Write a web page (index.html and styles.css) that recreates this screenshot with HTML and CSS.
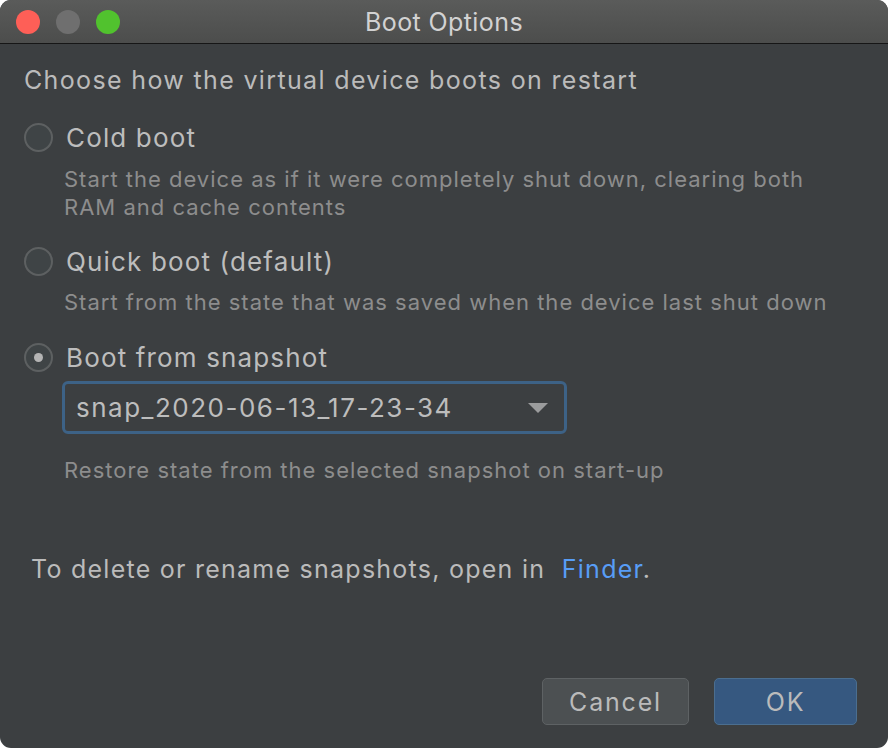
FILE: index.html
```html
<!DOCTYPE html>
<html>
<head>
<meta charset="utf-8">
<link rel="stylesheet" href="styles.css">
</head>
<body>
<div class="window">
  <div class="titlebar">
    <div class="lights">
      <span class="light red"></span>
      <span class="light gray"></span>
      <span class="light green"></span>
    </div>
    <div class="title">Boot Options</div>
  </div>
  <div class="content">
    <div class="heading">Choose how the virtual device boots on restart</div>

    <div class="option opt-cold">
      <span class="radio"></span>
      <span class="label">Cold boot</span>
    </div>
    <div class="desc desc-cold">Start the device as if it were completely shut down, clearing both<br>RAM and cache contents</div>

    <div class="option opt-quick">
      <span class="radio"></span>
      <span class="label">Quick boot (default)</span>
    </div>
    <div class="desc desc-quick">Start from the state that was saved when the device last shut down</div>

    <div class="option opt-snap">
      <span class="radio checked"></span>
      <span class="label">Boot from snapshot</span>
    </div>
    <div class="combo">
      <span class="combo-text">snap_2020-06-13_17-23-34</span>
      <svg class="arrow" width="20" height="10" viewBox="0 0 20 10"><path d="M0 0 L20 0 L10 10 Z" fill="#9b9c9d"/></svg>
    </div>
    <div class="desc desc-restore">Restore state from the selected snapshot on start-up</div>

    <div class="finder-line">To delete or rename snapshots, open in &nbsp;<a class="link">Finder</a>.</div>

    <div class="footer">
      <button class="btn cancel">Cancel</button>
      <button class="btn ok">OK</button>
    </div>
  </div>
</div>
</body>
</html>
```
FILE: styles.css
```css
html, body {
  margin: 0;
  padding: 0;
  background: #ffffff;
}
body {
  font-family: Inter, "Noto Sans", sans-serif;
}
.window {
  width: 888px;
  height: 748px;
  border-radius: 11px;
  overflow: hidden;
  background: #3c3f41;
  display: flex;
  flex-direction: column;
}
.titlebar {
  height: 43px;
  flex: none;
  background: linear-gradient(#5a5b5a, #4c4d4c);
  border-bottom: 1px solid #161616;
  display: flex;
  align-items: center;
  position: relative;
}
.lights {
  display: flex;
  gap: 16px;
  padding-left: 16px;
}
.light {
  width: 24px;
  height: 24px;
  border-radius: 50%;
  display: block;
}
.red { background: #fe5f57; }
.gray { background: #6f6f6f; }
.green { background: #51c22e; }
.title {
  position: absolute;
  left: 0;
  right: 0;
  top: 0;
  bottom: 0;
  display: flex;
  align-items: center;
  justify-content: center;
  color: #d2d2d2;
  font-size: 25px;
  letter-spacing: 0.4px;
}
.content {
  flex: 1;
  display: flex;
  flex-direction: column;
  padding: 0 0 0 24px;
  color: #bbbbbb;
}
.heading {
  margin-top: 22px;
  font-size: 25px;
  line-height: 28px;
  letter-spacing: 1.35px;
}
.option {
  display: flex;
  align-items: center;
  height: 30px;
}
.opt-cold { margin-top: 28px; }
.opt-quick { margin-top: 25px; }
.opt-snap { margin-top: 26px; }
.radio {
  width: 25px;
  height: 25px;
  border: 2px solid #5d6061;
  border-radius: 50%;
  background: #3f4446;
  display: flex;
  align-items: center;
  justify-content: center;
  flex: none;
}
.radio.checked::after {
  content: "";
  width: 9px;
  height: 9px;
  border-radius: 50%;
  background: #b4b4b4;
}
.label {
  margin-left: 13px;
  font-size: 26px;
  letter-spacing: 1.15px;
  color: #bdbdbd;
}
.desc {
  margin-left: 40px;
  font-size: 22px;
  line-height: 28px;
  letter-spacing: 1px;
  color: #8d8d8d;
}
.desc-cold { margin-top: 13px; }
.desc-quick { margin-top: 12px; }
.desc-restore { margin-top: 22px; }
.combo {
  margin-top: 9px;
  margin-left: 38px;
  border: 3px solid #3d6286;
  border-radius: 6px;
  display: flex;
  align-items: center;
  justify-content: space-between;
  padding: 0 16px 0 11px;
  box-sizing: border-box;
  height: 53px;
  width: 505px;
}
.combo-text {
  font-size: 26px;
  letter-spacing: 1.5px;
  color: #bdbdbd;
}
.arrow {
  display: block;
}
.finder-line {
  margin-top: 71px;
  margin-left: 7px;
  font-size: 25px;
  line-height: 28px;
  letter-spacing: 1.25px;
}
.link {
  color: #589df6;
}
.footer {
  margin-top: auto;
  margin-bottom: 23px;
  display: flex;
  justify-content: flex-end;
  gap: 25px;
  padding-right: 31px;
}
.btn {
  height: 47px;
  border-radius: 5px;
  font-family: Inter, "Noto Sans", sans-serif;
  font-size: 25px;
  letter-spacing: 1.8px;
  color: #bbbbbb;
  padding: 0;
}
.cancel {
  width: 147px;
  background: #4c5052;
  border: 1px solid #5e6264;
}
.ok {
  width: 143px;
  background: #365880;
  border: 1px solid #4b6e8f;
}
```
